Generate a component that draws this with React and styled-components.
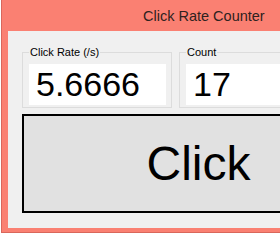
import React from "react";
import styled, { createGlobalStyle } from "styled-components";

const Global = createGlobalStyle`
  html, body {
    margin: 0;
    padding: 0;
    width: 280px;
    height: 234px;
    overflow: hidden;
    background: #ffffff;
    font-family: "Liberation Sans", Arial, sans-serif;
  }
`;

const Window = styled.div`
  margin-left: 1px;
  width: 420px;
  background: #fa8072;
  border-left: 1px solid #d9675b;
  border-bottom: 1px solid #d9675b;
  padding: 0 0 4px 6px;
`;

const TitleBar = styled.div`
  height: 31px;
  display: flex;
  align-items: center;
  padding-left: 135px;
  font-size: 14.5px;
  color: #2e2220;
  padding-top: 1px;
  box-sizing: border-box;
`;

const Client = styled.div`
  background: #f0f0f0;
  padding: 15px 0 15px 14px;
  display: flex;
  flex-direction: column;
  gap: 6px;
`;

const Row = styled.div`
  display: flex;
  gap: 7px;
`;

const Group = styled.fieldset`
  margin: 0;
  width: 150px;
  box-sizing: border-box;
  border: 1px solid #dcdcdc;
  padding: 5px 5px 2px 6px;
  min-width: 0;
`;

const Legend = styled.legend`
  font-size: 11px;
  line-height: 13px;
  color: #000;
  padding: 0 1px;
  margin-left: 0;
`;

const Field = styled.div`
  width: 137px;
  height: 41px;
  background: #ffffff;
  font-size: 34px;
  line-height: 41px;
  padding-left: 7px;
  box-sizing: border-box;
  color: #000;
  white-space: nowrap;
  overflow: hidden;
`;

const BigButton = styled.button`
  width: 353px;
  height: 99px;
  box-sizing: border-box;
  border: 2px solid #000;
  background: #e1e1e1;
  font-family: "Liberation Sans", Arial, sans-serif;
  font-size: 48px;
  color: #000;
  padding: 0;
  margin: 0;
  text-align: center;
`;

export default function App() {
  return (
    <>
      <Global />
      <Window>
        <TitleBar>Click Rate Counter</TitleBar>
        <Client>
          <Row>
            <Group>
              <Legend>Click Rate (/s)</Legend>
              <Field>5.6666</Field>
            </Group>
            <Group>
              <Legend>Count</Legend>
              <Field>17</Field>
            </Group>
          </Row>
          <BigButton>Click</BigButton>
        </Client>
      </Window>
    </>
  );
}
